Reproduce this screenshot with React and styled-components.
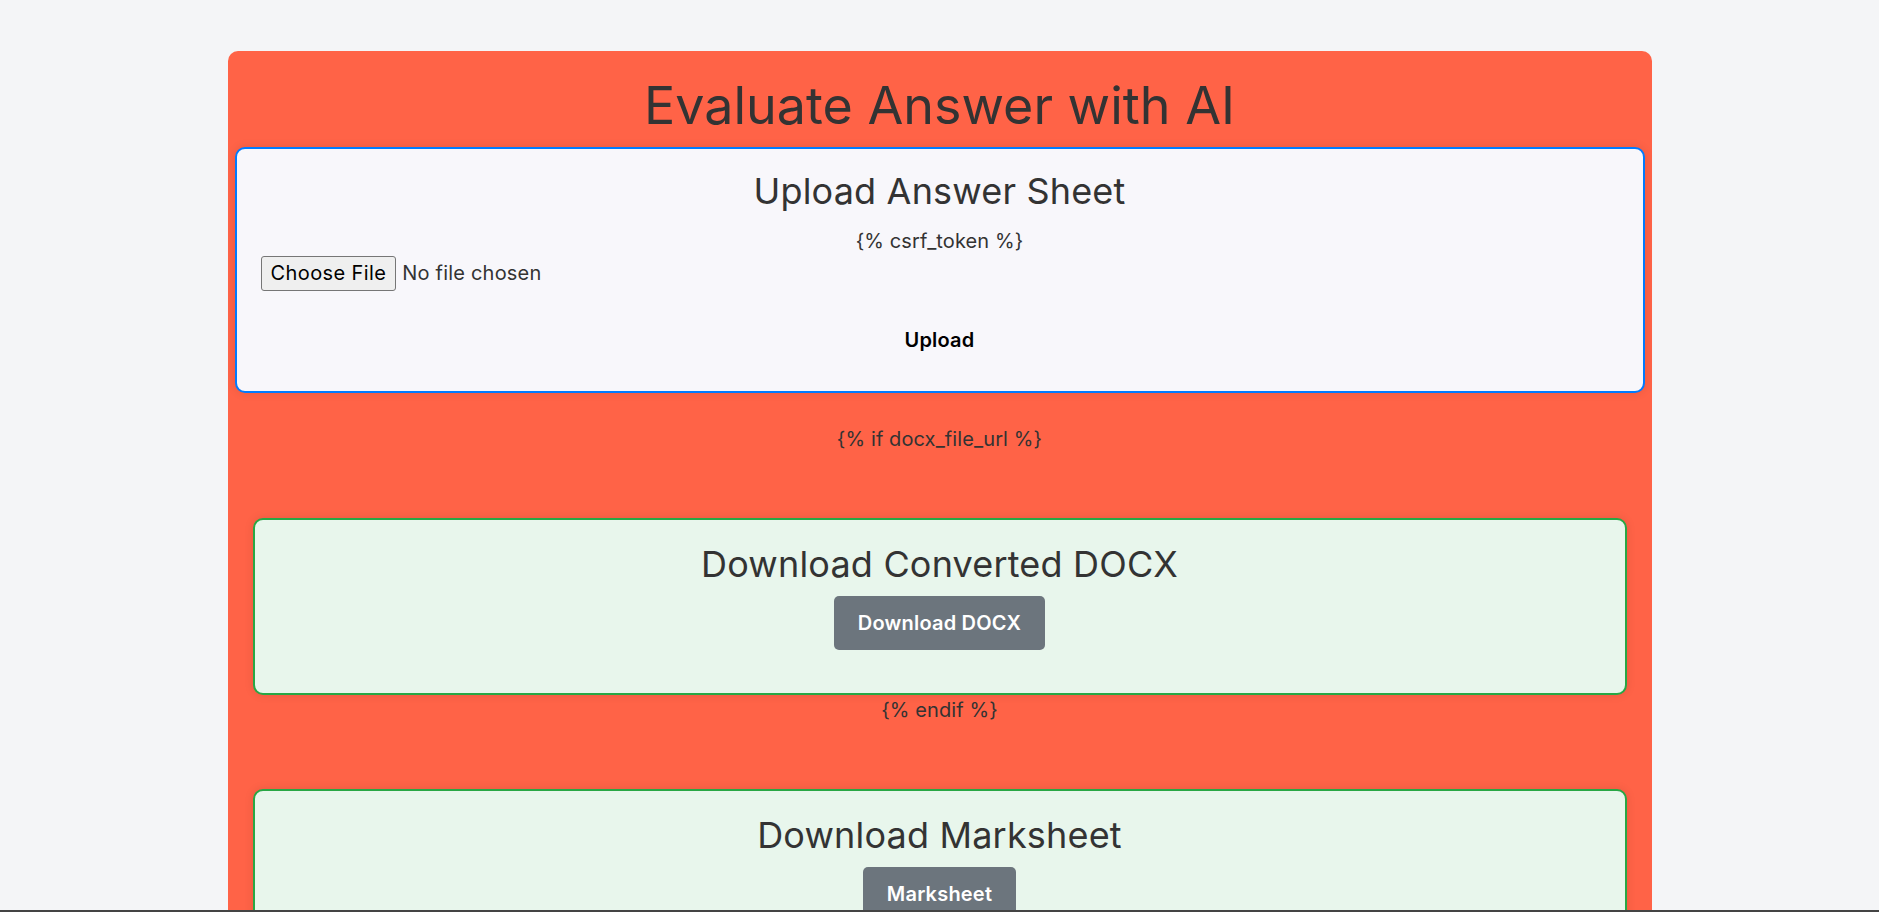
import React from "react";
import styled, { createGlobalStyle } from "styled-components";

const GlobalStyle = createGlobalStyle`
  html, body {
    margin: 0;
    padding: 0;
  }
  body {
    background: #f4f5f7;
    font-family: Inter, "Liberation Sans", sans-serif;
    color: #333333;
  }
  body::after {
    content: "";
    position: fixed;
    left: 0;
    right: 0;
    bottom: 0;
    height: 2px;
    background: #444444;
  }
`;

const Container = styled.main`
  width: 1424px;
  margin: 51px auto 0;
  padding: 24px 7px 40px;
  box-sizing: border-box;
  background: #ff6347;
  border-radius: 10px;
`;

const Title = styled.h1`
  margin: 0 0 10px;
  font-size: 52px;
  font-weight: 400;
  line-height: 1.2;
  text-align: center;
  color: #333333;
`;

const UploadCard = styled.form`
  display: block;
  padding: 21px 24px 24px;
  background: #f8f7fb;
  border: 2px solid #007bff;
  border-radius: 10px;
  box-shadow: 0 0 10px rgba(0, 0, 0, 0.1);
`;

const CardHeading = styled.h2`
  margin: 0 0 ${(p) => p.$gap || 0}px;
  font-size: 36px;
  font-weight: 400;
  line-height: 1.2;
  letter-spacing: 0.005em;
  text-align: center;
  color: #333333;
`;

const TemplateText = styled.p`
  margin: ${(p) => p.$top || 0}px 0 ${(p) => p.$bottom || 0}px;
  font-size: 20px;
  line-height: 1.5;
  letter-spacing: 0.005em;
  text-align: center;
  color: #333333;
`;

const FileRow = styled.label`
  display: flex;
  align-items: center;
  gap: 6px;
  height: 35px;
`;

const FileButton = styled.span`
  display: inline-flex;
  align-items: center;
  height: 35px;
  box-sizing: border-box;
  padding: 0 9px;
  background: #efefef;
  border: 1px solid #767676;
  border-radius: 3px;
  font-size: 20px;
  letter-spacing: 0.02em;
  color: #000000;
`;

const FileName = styled.span`
  font-size: 20px;
  letter-spacing: 0.01em;
  color: #333333;
`;

const SubmitButton = styled.button`
  display: block;
  margin: 22px auto 0;
  padding: 12px 24px;
  background: transparent;
  border: none;
  font-family: inherit;
  font-size: 20px;
  font-weight: 600;
  line-height: 1.5;
  letter-spacing: 0.01em;
  color: #000000;
  cursor: pointer;
`;

const DownloadCard = styled.section`
  margin: 0 18px;
  padding: 23px 24px 43px;
  background: #e8f6ec;
  border: 2px solid #28a745;
  border-radius: 10px;
  box-shadow: 0 0 10px rgba(0, 0, 0, 0.1);
  text-align: center;
`;

const ActionButton = styled.a`
  display: inline-block;
  margin-top: 10px;
  padding: 12px 24px;
  background: #6c757d;
  border-radius: 5px;
  font-size: 20px;
  font-weight: 600;
  line-height: 1.5;
  letter-spacing: 0.01em;
  color: #ffffff;
  text-decoration: none;
`;

export default function App() {
  return (
    <>
      <GlobalStyle />
      <Container>
        <Title>Evaluate Answer with AI</Title>
        <UploadCard onSubmit={(e) => e.preventDefault()}>
          <CardHeading $gap={12}>Upload Answer Sheet</CardHeading>
          <TemplateText>{"{% csrf_token %}"}</TemplateText>
          <FileRow>
            <FileButton>Choose File</FileButton>
            <FileName>No file chosen</FileName>
          </FileRow>
          <SubmitButton type="submit">Upload</SubmitButton>
        </UploadCard>

        <TemplateText $top={31} $bottom={64}>
          {"{% if docx_file_url %}"}
        </TemplateText>

        <DownloadCard>
          <CardHeading>Download Converted DOCX</CardHeading>
          <ActionButton href="#">Download DOCX</ActionButton>
        </DownloadCard>

        <TemplateText $bottom={64}>{"{% endif %}"}</TemplateText>

        <DownloadCard>
          <CardHeading>Download Marksheet</CardHeading>
          <ActionButton href="#">Marksheet</ActionButton>
        </DownloadCard>
      </Container>
    </>
  );
}
